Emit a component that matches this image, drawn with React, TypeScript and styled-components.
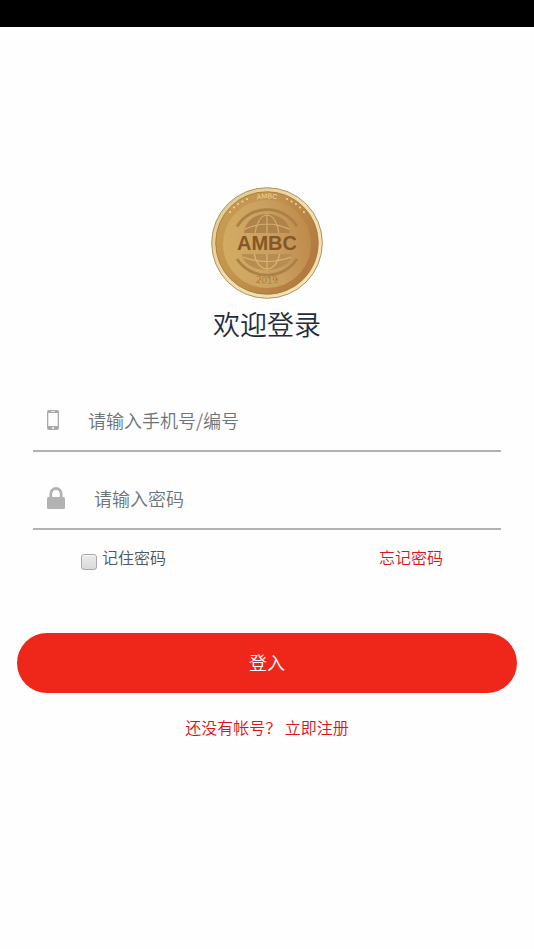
import React from "react";
import styled, { createGlobalStyle } from "styled-components";

const GlobalStyle = createGlobalStyle`
  *, *::before, *::after { box-sizing: border-box; }
  body {
    margin: 0;
    background: #fefefe;
    color: #1f2d3d;
    font-family: "Noto Sans CJK SC", sans-serif;
    font-weight: 350;
  }
`;

const StatusBar = styled.div`
  height: 27px;
  background: #000;
`;

const Page = styled.main`
  display: flex;
  flex-direction: column;
  padding: 160px 17px 40px;
`;

const Header = styled.header`
  display: flex;
  flex-direction: column;
  align-items: center;
`;

const Coin = styled.svg`
  display: block;
  width: 112px;
  height: 112px;
`;

const Title = styled.h1`
  margin: 5px 0 0;
  font-size: 27px;
  line-height: 40px;
  font-weight: inherit;
`;

const Form = styled.form`
  display: flex;
  flex-direction: column;
  margin-top: 30px;
`;

const Field = styled.label`
  display: flex;
  align-items: center;
  gap: 29px;
  height: 78px;
  margin: 0 16px;
  padding: 16px 14px 0;
  border-bottom: 2px solid #b2b2b2;

  svg {
    flex: none;
    display: block;
  }
`;

const TextInput = styled.input`
  flex: 1;
  min-width: 0;
  height: 32px;
  padding: 0;
  border: 0;
  outline: 0;
  background: transparent;
  color: #1f2d3d;
  font: inherit;
  font-size: 18px;
  line-height: 32px;

  &::placeholder {
    color: #6b747d;
    opacity: 1;
  }
`;

const Options = styled.div`
  display: flex;
  justify-content: space-between;
  align-items: flex-start;
  margin: 13px 74px 0 64px;
  font-size: 16px;
  line-height: 28px;
`;

const Remember = styled.label`
  display: flex;
  align-items: center;
  gap: 5px;
  color: #4b5867;
`;

const Checkbox = styled.input`
  appearance: none;
  width: 16px;
  height: 16px;
  margin: 11px 0 1px;
  border: 1px solid #a9a9a9;
  border-radius: 3px;
  background: linear-gradient(#ececec, #d9d9d9);
  box-shadow: inset 0 1px 1px #f6f6f6;

  &:checked {
    background: #7d7d7d;
  }
`;

const Link = styled.a`
  color: #d8141c;
  text-decoration: none;
`;

const Submit = styled.button`
  height: 60px;
  margin: 62px 0 0;
  padding: 0 0 2px;
  border: 0;
  border-radius: 30px;
  background: #ee271a;
  color: #fff;
  font: inherit;
  font-size: 18px;
`;

const Register = styled.p`
  margin: 20px 0 0;
  text-align: center;
  font-size: 16px;
  line-height: 28px;
`;

const starsLeft = [
  [19, 25], [23, 20.5], [27, 17], [31.5, 14.5], [36, 12],
];

function CoinLogo() {
  return (
    <Coin viewBox="0 0 112 112" role="img" aria-label="AMBC 2019">
      <defs>
        <linearGradient id="rim" x1="0" y1="0" x2="1" y2="1">
          <stop offset="0" stopColor="#dcc48c" />
          <stop offset="0.5" stopColor="#f1dfb0" />
          <stop offset="1" stopColor="#f5e0b0" />
        </linearGradient>
        <linearGradient id="ring" x1="0" y1="0" x2="1" y2="0.5">
          <stop offset="0" stopColor="#c99f52" />
          <stop offset="0.5" stopColor="#c1924d" />
          <stop offset="1" stopColor="#b47b40" />
        </linearGradient>
        <linearGradient id="face" x1="0" y1="0.6" x2="1" y2="0.4">
          <stop offset="0" stopColor="#d3ac62" />
          <stop offset="0.55" stopColor="#caa060" />
          <stop offset="1" stopColor="#be8a4b" />
        </linearGradient>
        <path id="topArc" d="M13 41a46 46 0 0 1 86 0" />
        <path id="bottomArc" d="M22 86a60 60 0 0 0 68 0" />
        <clipPath id="globeTop"><path d="M33 46a23 19 0 0 1 46 0z" /></clipPath>
        <clipPath id="globeBottom"><path d="M31 67h50a25 16 0 0 1-50 0z" /></clipPath>
      </defs>
      <circle cx="56" cy="56" r="55.300" fill="url(#rim)" stroke="#a88955" strokeWidth="0.900" />
      <circle cx="56" cy="56" r="51.300" fill="url(#ring)" stroke="#a57839" strokeWidth="0.800" />
      <circle cx="56" cy="57" r="44" fill="url(#face)" />
      {starsLeft.map(([x, y]) => (
        <g key={x} fill="#f0d8a5">
          <circle cx={x} cy={y} r="1" />
          <circle cx={112 - x} cy={y} r="1" />
        </g>
      ))}
      <g fill="none" stroke="#ad8048" strokeWidth="2.800">
        <path d="M26 39.500a35 35 0 0 1 60 0" />
        <path d="M26 72a36 36 0 0 0 60 0" />
      </g>
      <g clipPath="url(#globeTop)">
        <path d="M30 24h52v22H30z" fill="#af8249" />
        <g fill="none" stroke="#d2ad70" strokeWidth="1.200">
          <path d="M56 24v22M32 43q24-12 48 0" />
          <ellipse cx="56" cy="50" rx="12" ry="22" />
        </g>
      </g>
      <g clipPath="url(#globeBottom)">
        <path d="M30 66h52v20H30z" fill="#b88d51" />
        <g fill="none" stroke="#d9b677" strokeWidth="1.200">
          <path d="M56 66v18M32 70q24 9 48 0" />
          <ellipse cx="56" cy="62" rx="13" ry="20" />
        </g>
      </g>
      <text x="56" y="63" textAnchor="middle" fill="#865626" fontFamily="Liberation Sans, sans-serif" fontWeight="700" fontSize="20">AMBC</text>
      <text textAnchor="middle" fill="#f0d8a5" fontFamily="Liberation Sans, sans-serif" fontSize="7">
        <textPath href="#topArc" startOffset="50%">AMBC</textPath>
      </text>
      <text textAnchor="middle" fill="#80531f" fontFamily="DejaVu Sans, sans-serif" fontSize="9">
        <textPath href="#bottomArc" startOffset="50%">2019</textPath>
      </text>
    </Coin>
  );
}

function PhoneIcon() {
  return (
    <svg width="12" height="20" viewBox="0 0 12 20" aria-hidden="true">
      <path fill="#aaa" fillRule="evenodd" d="M2 0h8a2 2 0 0 1 2 2v16a2 2 0 0 1-2 2H2a2 2 0 0 1-2-2V2a2 2 0 0 1 2-2zM1.300 3v13h9.400V3zM4 1.200v.8h4v-.8zM6 17a1 1 0 1 0 0 2 1 1 0 0 0 0-2z" />
    </svg>
  );
}

function LockIcon() {
  return (
    <svg width="18" height="22" viewBox="0 0 18 22" aria-hidden="true">
      <path d="M3.800 11V6.700a5.200 5.200 0 0 1 10.400 0V11" fill="none" stroke="#b2b2b2" strokeWidth="2.800" />
      <rect y="10" width="18" height="12" rx="1.500" fill="#b2b2b2" />
    </svg>
  );
}

export default function App() {
  return (
    <>
      <GlobalStyle />
      <StatusBar />
      <Page>
        <Header>
          <CoinLogo />
          <Title>欢迎登录</Title>
        </Header>
        <Form onSubmit={(e) => e.preventDefault()}>
          <Field>
            <PhoneIcon />
            <TextInput type="text" name="account" aria-label="手机号/编号" placeholder="请输入手机号/编号" />
          </Field>
          <Field>
            <LockIcon />
            <TextInput type="password" name="password" aria-label="密码" placeholder="请输入密码" />
          </Field>
          <Options>
            <Remember>
              <Checkbox type="checkbox" name="remember" />
              记住密码
            </Remember>
            <Link href="#forgot">忘记密码</Link>
          </Options>
          <Submit type="submit">登入</Submit>
        </Form>
        <Register>
          <Link href="#register">还没有帐号？ 立即注册</Link>
        </Register>
      </Page>
    </>
  );
}
